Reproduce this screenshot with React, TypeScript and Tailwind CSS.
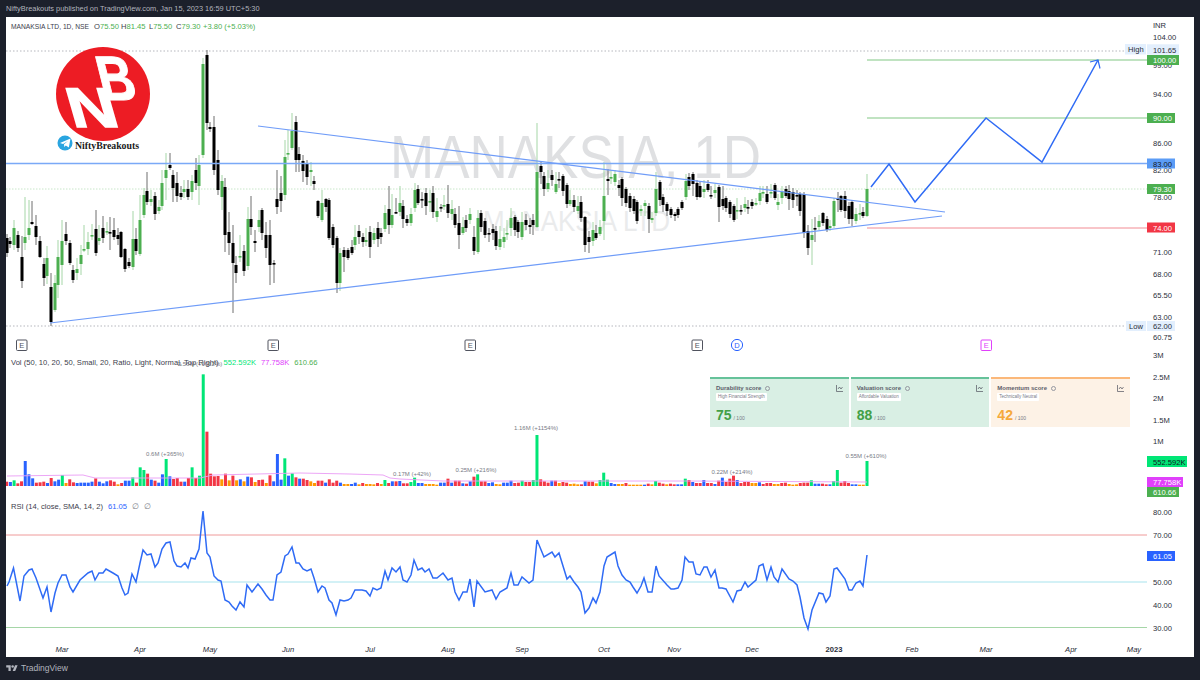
import { ReactNode } from "react";

// [x, bodyTop, bodyBottom, up, wickTop?, wickBottom?] in page pixels
type Candle = [number, number, number, number, number?, number?];

const candles: Candle[] = [
  [7,238,253,0],[10,241,244,0],[14,228,245,1,220,250],[18,235,248,0],[22,257,281,0,236,288],[25,237,243,1,197,250],[29,228,235,1,200,240],[32,222,224,0,201,225],[36,226,237,0,215,245],[40,241,257,0,236,258],
  [44,264,278,0,258,286],[47,258,276,1,246,284],[51,287,322,0,273,326],[55,283,310,1,275,312],[58,257,285,1,240,298],[62,241,265,1,220,285],[66,234,241,0,222,245],[70,243,263,0,240,265],[73,270,280,0,265,283],[77,269,273,1,258,280],
  [81,255,264,1,245,275],[84,249,250,1,225,252],[88,242,249,1,232,255],[92,235,236,1,224,240],[96,229,253,0,210,256],[99,238,241,1,225,245],[103,228,238,0,216,243],[107,231,232,1,222,235],[110,232,233,0,217,250],[114,230,237,0,218,240],
  [118,235,239,0,228,245],[121,232,257,0,231,258],[125,249,269,0,248,272],[129,262,266,0,258,268],[133,239,267,1,211,270],[136,239,251,0,228,255],[140,220,254,1,195,256],[144,195,215,1,188,218],[147,191,202,0,172,205],[151,199,202,1,190,206],
  [155,196,214,0,192,220],[159,207,211,1,200,214],[162,183,206,1,170,210],[166,170,178,1,153,200],[170,165,168,0,153,170],[173,175,188,0,170,202],[177,183,196,0,172,202],[181,193,197,0,186,200],[184,189,192,1,180,198],[188,189,197,0,180,200],
  [192,181,192,1,175,200],[196,170,183,0,158,190],[199,165,186,1,155,205],[203,64,155,1,58,158],[207,55,123,0,50,130],[210,127,129,0,122,132],[214,127,170,0,116,175],[218,160,190,0,150,195],[222,181,197,1,175,210],[225,187,235,0,178,252],
  [229,232,243,0,212,255],[233,243,263,0,225,313],[236,265,273,0,256,283],[240,256,257,1,235,262],[244,251,271,0,245,276],[248,219,266,1,207,270],[251,219,227,0,196,235],[255,241,243,0,230,252],[259,220,227,1,210,232],[262,210,233,0,208,240],
  [266,235,248,0,222,258],[270,235,265,0,220,285],[274,263,264,0,260,283],[277,199,207,0,170,214],[281,193,201,0,176,212],[285,157,195,1,140,200],[288,153,154,1,130,160],[292,131,148,1,113,150],[296,122,160,0,116,172],[299,154,160,0,147,172],
  [303,161,171,0,155,182],[307,163,177,0,160,185],[311,170,172,1,162,186],[314,181,184,0,176,190],[318,201,216,0,200,218],[322,203,220,1,190,222],[326,199,207,0,198,212],[329,200,238,0,198,240],[333,227,245,0,224,248],[337,238,283,0,236,293],
  [340,253,283,1,248,291],[344,250,257,0,247,272],[348,250,258,0,248,260],[352,247,253,0,240,255],[355,237,245,1,225,250],[359,231,237,0,225,244],[363,237,242,0,233,247],[366,240,242,1,228,246],[370,232,247,0,226,258],[374,233,240,1,228,244],
  [378,228,239,0,222,247],[381,233,237,0,228,244],[385,213,229,1,205,232],[389,209,225,0,186,234],[392,215,225,1,194,228],[396,212,213,0,198,214],[400,203,212,1,186,216],[403,206,219,0,200,228],[407,219,223,0,215,226],[411,214,223,1,208,226],
  [415,190,208,1,183,212],[418,189,203,0,185,205],[422,199,200,0,192,208],[426,193,206,0,188,215],[430,201,202,1,190,212],[433,193,212,0,186,218],[437,211,217,1,198,222],[441,207,208,0,204,212],[444,205,206,1,195,210],[448,204,213,0,185,218],
  [452,209,214,1,200,220],[455,214,225,0,208,228],[459,223,235,0,206,249],[463,227,233,1,217,235],[466,220,228,0,215,232],[470,214,220,1,208,224],[474,237,251,0,226,255],[478,218,252,1,210,254],[481,213,227,0,210,232],[485,221,235,0,218,238],
  [489,233,234,0,228,242],[493,229,233,0,224,240],[496,231,246,0,226,250],[500,239,247,1,226,250],[504,237,242,1,228,248],[507,233,234,1,220,240],[511,218,228,1,208,236],[515,217,230,0,215,236],[518,222,232,0,220,238],[522,222,237,1,212,240],
  [526,220,225,0,214,230],[530,225,227,0,218,234],[533,220,225,0,214,235],[537,172,227,1,123,228],[541,166,172,0,162,184],[544,176,189,0,172,196],[548,183,189,1,170,192],[552,175,180,0,170,186],[556,184,192,1,172,194],[559,179,180,0,172,188],
  [563,176,191,0,174,196],[567,185,204,0,183,208],[570,200,204,1,190,206],[574,200,207,0,195,212],[578,206,211,1,196,214],[581,202,218,0,196,222],[585,217,245,0,216,252],[589,237,242,0,231,253],[593,230,241,1,222,246],[596,233,238,0,225,240],
  [600,227,234,1,220,236],[604,196,221,1,162,240],[608,179,181,0,169,195],[611,177,178,1,171,184],[615,174,182,1,170,186],[619,185,188,0,180,196],[622,179,198,0,177,206],[626,189,203,0,187,207],[630,196,208,0,193,212],[634,199,211,0,196,214],
  [637,202,221,0,200,224],[641,209,211,1,205,216],[645,203,206,1,200,216],[649,206,219,0,203,233],[652,218,220,1,212,223],[656,189,213,1,172,216],[660,182,200,0,180,206],[663,197,205,0,194,212],[667,204,211,0,202,216],[671,209,215,0,207,218],
  [675,214,216,0,212,221],[678,209,215,0,207,218],[682,202,208,0,200,210],[686,181,197,1,174,200],[689,177,186,0,173,190],[693,174,184,0,172,196],[697,183,197,0,180,200],[700,186,197,0,182,198],[704,189,192,1,180,198],[708,184,190,0,180,192],
  [711,195,196,0,186,199],[715,190,193,1,184,198],[719,187,207,0,185,222],[723,199,206,0,186,210],[726,198,208,0,196,212],[730,202,214,0,200,218],[734,206,220,0,204,222],[737,210,211,1,198,219],[741,210,211,0,205,215],[745,204,208,1,197,212],
  [748,207,208,0,200,214],[752,202,206,0,199,209],[756,203,204,1,198,206],[760,193,201,1,186,205],[763,192,193,1,186,198],[767,194,202,0,186,204],[771,192,193,1,184,198],[775,185,198,0,183,200],[778,202,205,1,194,210],[782,192,198,1,186,204],
  [786,189,196,0,186,198],[789,191,199,0,185,210],[793,192,200,0,188,208],[797,195,196,0,190,206],[800,194,211,0,192,216],[804,194,233,0,192,238],[808,231,248,0,225,255],[812,235,240,1,219,265],[815,228,229,0,217,242],[819,221,227,1,215,230],
  [823,213,223,0,212,226],[827,219,230,0,216,232],[830,226,228,1,220,231],[834,201,226,1,198,228],[838,198,200,0,192,212],[841,196,210,0,195,212],[845,196,211,0,191,218],[849,206,219,0,202,224],[852,202,219,0,200,226],[856,214,221,1,208,224],
  [860,213,214,1,204,220],[863,212,216,0,207,218],[867,189,216,1,174,217],
];

// colour letter + height at 3x, read bar by bar off the reference
const volumes =
  "r13 b12 g17 r8 r14 b75 b35 b23 r10 r11 r13 b9 r24 b14 b19 g33 o9 r20 r11 b9 b10 b10 b10 b13 r23 b13 b8 b14 r17 r13 o5 r9 b16 b16 g26 r10 g56 g48 r37 b19 r16 b10 b35 g81 b29 r21 r24 r13 b13 r24 g56 r24 g31 g335 r163 r37 r29 r30 o20 r37 o17 r31 o17 b20 o14 b28 r26 o12 r18 r19 o9 r32 b14 b96 b19 g83 b31 g38 r26 b22 r22 r18 o14 o9 r16 r16 b10 r20 r10 r16 b10 o6 o6 b6 b10 o5 r9 o6 o6 o5 r9 o6 g18 r9 b14 r14 " +
  "b15 r8 r8 g12 g25 b9 b9 o6 o6 o6 o4 b10 b10 r22 b10 r16 r16 b8 r7 b14 r28 g35 r14 r14 b9 b11 o6 o5 b10 b10 b16 r9 r10 g16 r12 r12 g18 g153 r20 r14 r10 b16 r16 o9 r12 r10 o6 o7 o5 r5 b14 r13 r13 o8 g18 g40 g19 b9 b6 o6 o6 r9 o4 o4 o4 o4 b4 r7 o5 g15 r10 r7 o5 r7 r5 b5 b5 g22 r18 b12 r9 r9 b18 r9 r9 b6 r16 b25 r12 r22 r31 b18 r9 r12 r12 o9 o9 b11 r6 r9 r9 o6 o6 r9 r10 o6 o4 o5 r9 r10 r10 g17 b7 b7 r7 r5 b5 g15 g48 r10 r15 r9 b5 b5 o4 o4 g75";

const volColors: Record<string, string> = { r: "#f23645", b: "#2962ff", g: "#00e676", o: "#ff9800" };

const rsi =
  "7,586 9,582 13.5,568 20,601 24,576 29,570 32,569 36,578 43,598 47,587 51,612 55,593 58,583 62,575 66,575 70,587 73,592 80,580 88,573 92,571 95,580 99,573 103,573 106,569 113,573 118,576 122,588 125,595 128,593 132,574 136,582 140,563 143,550 147,555 151,554 155,567 158,563 162,549 166,543 170,542 174,561 177,566 181,567 185,563 188,568 191,558 195,559 199,549 203,511 207,553 210,557 214,576 218,580 221,581 225,600 229,602 232,606 236,610 240,602 244,607 247,585 252,592 258,584 262,589 266,595 270,600 273,600 277,575 281,572 285,556 288,554 292,547 296,563 299,563 303,569 307,571 311,569 314,578 318,592 322,586 325,588 329,600 332,603 336,615 340,600 344,601 348,600 351,598 355,590 359,590 362,590 366,591 370,596 373,588 377,590 381,588 385,571 388,580 392,568 396,572 " +
  "400,567 403,580 407,582 411,575 414,560 418,570 422,568 425,572 429,569 433,578 437,578 443,573 448,580 452,578 455,592 459,600 463,592 467,592 470,579 474,607 477,581 485,592 492,590 496,599 500,592 507,588 511,573 514,585 518,585 522,577 529,583 533,580 537,540 544,557 552,552 555,557 559,553 567,579 570,576 574,582 578,587 581,592 585,613 589,608 593,598 596,603 600,592 604,566 607,557 615,552 618,566 622,575 626,580 630,582 633,587 637,593 641,586 644,578 648,592 652,592 656,566 659,576 667,585 671,589 674,589 678,588 682,580 685,557 689,562 693,562 696,574 700,575 704,567 707,567 711,577 715,570 719,588 722,588 726,589 733,602 737,591 741,590 745,582 748,587 756,580 759,566 763,564 767,580 771,567 774,577 778,582 782,569 789,579 793,581 797,585 800,597 804,618 808,629 812,610 819,593 823,594 826,602 830,596 834,569 837,568 845,579 849,590 852,590 856,583 860,581 863,586 867,555";

const volSma =
  "7,476 83,475 95,478 200,478 213,475 300,473 350,474 383,475 390,478 400,479 443,481 687,481 867,482";

const FONT = "font-['Liberation_Sans',sans-serif]";

function Pane({ top, height, children }: { top: number; height: number; children: ReactNode }) {
  return (
    <svg width={1187} height={height} viewBox={`6 ${top} 1187 ${height}`} className="block shrink-0 overflow-visible">
      {children}
    </svg>
  );
}

function Candles() {
  return (
    <g>
      {candles.map(([x, top, bottom, up, wt, wb], i) => (
        <g key={i}>
          <line x1={x} x2={x} y1={wt ?? top - 4} y2={wb ?? bottom + 4} stroke={up ? "#a5d6a7" : "#6f6f6f"} strokeWidth={1} />
          <rect x={x - 1.5} y={top} width={3} height={Math.max(bottom - top, 1.6)} fill={up ? "#4caf50" : "#000000"} />
        </g>
      ))}
    </g>
  );
}

function Axis({ y, label }: { y: number; label: string }) {
  return (
    <text x={1153} y={y + 3} className="text-[7.6px] fill-[#2a2e39]">
      {label}
    </text>
  );
}

function Tag({ y, w, bg, color = "#ffffff", label, h = 10 }: { y: number; w: number; bg: string; color?: string; label: string; h?: number }) {
  return (
    <g>
      <rect x={1147} y={y - h / 2} width={w} height={h} fill={bg} />
      <text x={1153} y={y + 3} fill={color} className="text-[7.6px]">
        {label}
      </text>
    </g>
  );
}

function Earn({ x, color = "#50535e" }: { x: number; color?: string }) {
  return (
    <g>
      <rect x={x - 5} y={340} width={10.5} height={10.5} rx={1} fill="#ffffff" stroke={color} strokeWidth={1} />
      <text x={x + 0.2} y={348} textAnchor="middle" fill={color} className="text-[7.5px]">
        E
      </text>
    </g>
  );
}

function VolLabel({ x, y, label, color = "#787b86" }: { x: number; y: number; label: string; color?: string }) {
  return (
    <text x={x} y={y} textAnchor="middle" fill={color} className="text-[6px]">
      {label}
    </text>
  );
}

function NbLogo() {
  return (
    <g>
      <circle cx={103} cy={94} r={47} fill="#ed1c24" />
      <text transform="translate(73 127) skewX(16) scale(1.2 1)" stroke="#ffffff" strokeWidth={1.6} className="text-[56px] font-bold fill-white">
        N
      </text>
      <text transform="translate(103 100) skewX(14) scale(.8 1)" stroke="#ffffff" strokeWidth={1} className="text-[63px] font-bold fill-white">
        B
      </text>
      <circle cx={65} cy={143} r={7.5} fill="#2aa5e0" />
      <path d="M60 143l10.5-4.4-1.7 9-3-2.2-1.5 1.5-.3-2.6 4-3.4-5 3z" fill="#ffffff" />
      <text x={75} y={149} className="font-['Liberation_Serif',serif] text-[9.8px] font-bold fill-[#1a1a1a]">
        NiftyBreakouts
      </text>
    </g>
  );
}

function MainPane() {
  return (
    <Pane top={17} height={333}>
      <text x={390} y={178} textLength={371} lengthAdjust="spacingAndGlyphs" className="text-[62px] fill-[#dfe0e2]">
        MANAKSIA, 1D
      </text>
      <text x={483} y={231} textLength={187} lengthAdjust="spacingAndGlyphs" className="text-[30px] fill-[#eaebec]">
        MANAKSIA LTD
      </text>

      <line x1={6} x2={1125} y1={51} y2={51} stroke="#9598a1" strokeWidth={0.7} strokeDasharray="1.5 2" />
      <line x1={6} x2={1125} y1={326} y2={326} stroke="#9598a1" strokeWidth={0.7} strokeDasharray="1.5 2" />
      <line x1={6} x2={1147} y1={189} y2={189} stroke="#c8e6c9" strokeWidth={1} strokeDasharray="1.5 1.5" />

      <Candles />

      <line x1={6} x2={1147} y1={163.5} y2={163.5} stroke="#7aa9f7" strokeWidth={1.3} />
      <line x1={867} x2={1147} y1={60} y2={60} stroke="#81c784" strokeWidth={1} />
      <line x1={867} x2={1147} y1={118} y2={118} stroke="#81c784" strokeWidth={1} />
      <line x1={867} x2={1147} y1={228} y2={228} stroke="#f28b93" strokeWidth={1} />

      <line x1={258} y1={126} x2={945} y2={212} stroke="#6f9cf8" strokeWidth={1.2} />
      <line x1={50} y1={323} x2={942} y2={216} stroke="#6f9cf8" strokeWidth={1.2} />
      <polyline points="871,187 889,164 915,202 986,118 1042,162 1098,60" fill="none" stroke="#2f6bf5" strokeWidth={1.5} />
      <polyline points="1090,62 1098,60 1100,68.5" fill="none" stroke="#2f6bf5" strokeWidth={1.2} />

      <NbLogo />

      <text x={1153} y={28} className="text-[7.6px] fill-[#2a2e39]">
        INR
      </text>
      <Axis y={37} label="104.00" />
      <Axis y={65} label="99.00" />
      <Axis y={94} label="94.00" />
      <Axis y={143} label="86.00" />
      <Axis y={170} label="82.00" />
      <Axis y={197} label="78.00" />
      <Axis y={252} label="71.00" />
      <Axis y={274} label="68.00" />
      <Axis y={295} label="65.50" />
      <Axis y={317} label="63.00" />
      <Axis y={337} label="60.75" />

      <rect x={1125} y={44} width={21} height={10.5} fill="#e3effd" />
      <text x={1128} y={52} className="text-[7.6px] fill-[#2a2e39]">
        High
      </text>
      <Tag y={49.5} w={32} bg="#e3effd" color="#2a2e39" label="101.65" h={10.5} />
      <Tag y={60} w={32} bg="#4caf50" label="100.00" />
      <Tag y={118} w={28} bg="#4caf50" label="90.00" />
      <Tag y={163.5} w={28} bg="#5b9cf6" color="#131722" label="83.00" />
      <Tag y={189} w={28} bg="#4caf50" label="79.30" />
      <Tag y={227.5} w={28} bg="#f23645" label="74.00" />
      <rect x={1126} y={321} width={20} height={10} fill="#e3effd" />
      <text x={1129} y={329} className="text-[7.6px] fill-[#2a2e39]">
        Low
      </text>
      <Tag y={326} w={28} bg="#e3effd" color="#2a2e39" label="62.00" />

      <Earn x={21.5} />
      <Earn x={273} />
      <Earn x={470} />
      <Earn x={697} />
      <Earn x={986} color="#e040fb" />
      <circle cx={737} cy={345} r={5.6} fill="#ffffff" stroke="#2962ff" strokeWidth={1} />
      <text x={737} y={348} textAnchor="middle" className="text-[7.5px] fill-[#2962ff]">
        D
      </text>
    </Pane>
  );
}

function VolumePane() {
  const bars = volumes.split(" ");
  const step = (867 - 6.7) / (bars.length - 1);
  return (
    <Pane top={350} height={140}>
      {bars.map((b, i) => {
        const h = Number(b.slice(1)) / 3;
        return <rect key={i} x={6.7 + i * step - 1.5} y={486 - h} width={3} height={h} fill={volColors[b[0]]} />;
      })}
      <polyline points={volSma} fill="none" stroke="#ea9cf5" strokeWidth={0.9} />

      <VolLabel x={200} y={366} label="2.56M (+1012%)" />
      <VolLabel x={165} y={456} label="0.6M (+365%)" />
      <VolLabel x={412} y={476} label="0.17M (+42%)" />
      <VolLabel x={476} y={472} label="0.25M (+216%)" />
      <VolLabel x={536} y={430} label="1.16M (+1154%)" />
      <VolLabel x={732} y={474} label="0.22M (+214%)" />
      <VolLabel x={866} y={458} label="0.55M (+610%)" />

      <Axis y={355} label="3M" />
      <Axis y={377} label="2.5M" />
      <Axis y={398} label="2M" />
      <Axis y={420} label="1.5M" />
      <Axis y={441} label="1M" />
      <Tag y={461.5} w={40} bg="#00e676" color="#131722" label="552.592K" h={11} />
      <Tag y={482} w={36} bg="#e040fb" label="77.758K" />
      <Tag y={492} w={32} bg="#4caf50" label="610.66" />
    </Pane>
  );
}

function RsiPane() {
  return (
    <Pane top={490} height={150}>
      <line x1={6} x2={1147} y1={535} y2={535} stroke="#ef9a9a" strokeWidth={1} />
      <line x1={6} x2={1147} y1={582} y2={582} stroke="#c4ecf3" strokeWidth={1.6} />
      <line x1={6} x2={1147} y1={627.5} y2={627.5} stroke="#a5d6a7" strokeWidth={1} />
      <polyline points={rsi} fill="none" stroke="#2f6bf5" strokeWidth={1.5} />

      <Axis y={512} label="80.00" />
      <Axis y={535} label="70.00" />
      <Axis y={582} label="50.00" />
      <Axis y={605} label="40.00" />
      <Axis y={628} label="30.00" />
      <Tag y={556} w={28} bg="#2962ff" label="61.05" />
    </Pane>
  );
}

const months: [string, number][] = [
  ["Mar", 62], ["Apr", 140], ["May", 210], ["Jun", 288], ["Jul", 370], ["Aug", 448], ["Sep", 522], ["Oct", 604],
  ["Nov", 674], ["Dec", 752], ["2023", 834], ["Feb", 912], ["Mar", 986], ["Apr", 1071], ["May", 1134],
];

function TimeAxis() {
  return (
    <Pane top={640} height={17}>
      {months.map(([m, x]) => (
        <text
          key={x}
          x={x}
          y={652}
          textAnchor="middle"
          className={m === "2023" ? "text-[7.6px] font-bold fill-[#2a2e39]" : "text-[7.6px] italic fill-[#2a2e39]"}
        >
          {m}
        </text>
      ))}
    </Pane>
  );
}

function ScoreCard({ title, pill, score, bg, bar, color }: { title: string; pill: string; score: number; bg: string; bar: string; color: string }) {
  return (
    <div className={`flex h-full flex-1 flex-col border-t-2 px-[6px] pt-[5px] ${bg} ${bar}`}>
      <div className="flex items-center justify-between">
        <div className="flex items-center gap-[4px]">
          <span className="text-[6px] font-bold leading-[8px] text-[#5d606b]">{title}</span>
          <span className="h-[5px] w-[5px] rounded-full border-[0.5px] border-[#9598a1]" />
        </div>
        <svg width="7" height="7" viewBox="0 0 7 7" fill="none" stroke="#50535e" strokeWidth="0.7">
          <path d="M.5 0v6.500H7M2 4l1.500-2 1.500 2L6.500 2" />
        </svg>
      </div>
      <span className="mt-[1px] self-start rounded-[1px] bg-white px-[2px] text-[4.5px] leading-[8px] text-[#787b86]">{pill}</span>
      <div className="mt-[7px] flex items-baseline gap-[2px]">
        <span className={`text-[14px] font-semibold leading-[14px] ${color}`}>{score}</span>
        <span className="text-[5px] text-[#787b86]">/ 100</span>
      </div>
    </div>
  );
}

function Legends() {
  return (
    <>
      <div className="absolute left-[5px] top-[5px] flex items-baseline whitespace-nowrap text-[7.6px] leading-[9px] text-[#3c404c]">
        <span className="w-[83px] text-[6.7px]">MANAKSIA LTD, 1D, NSE</span>
        <span className="w-[27px]">O<span className="text-[#4caf50]">75.50</span></span>
        <span className="w-[28px]">H<span className="text-[#4caf50]">81.45</span></span>
        <span className="w-[27px]">L<span className="text-[#4caf50]">75.50</span></span>
        <span className="w-[27px]">C<span className="text-[#4caf50]">79.30</span></span>
        <span className="text-[#4caf50]">+3.80 (+5.03%)</span>
      </div>
      <div className="absolute left-[5px] top-[341px] flex gap-[5px] whitespace-nowrap text-[7.6px] leading-[9px] text-[#3c404c]">
        <span>Vol (50, 10, 20, 50, Small, 20, Ratio, Light, Normal, Top Right)</span>
        <span className="text-[#00e676]">552.592K</span>
        <span className="text-[#e040fb]">77.758K</span>
        <span className="text-[#4caf50]">610.66</span>
      </div>
      <div className="absolute left-[5px] top-[485px] flex gap-[5px] whitespace-nowrap text-[7.6px] leading-[9px] text-[#3c404c]">
        <span>RSI (14, close, SMA, 14, 2)</span>
        <span className="text-[#2962ff]">61.05</span>
        <span className="text-[#787b86]">∅</span>
        <span className="text-[#787b86]">∅</span>
      </div>
    </>
  );
}

export default function App() {
  return (
    <div className={`flex h-[680px] w-[1200px] flex-col overflow-hidden bg-[#1c202b] ${FONT}`}>
      <div className="flex h-[17px] items-center px-[6px] text-[7.4px] text-[#b2b5be]">
        NiftyBreakouts published on TradingView.com, Jan 15, 2023 16:59 UTC+5:30
      </div>
      <div className="relative mx-[6px] flex h-[640px] flex-col overflow-hidden bg-white">
        <MainPane />
        <VolumePane />
        <RsiPane />
        <TimeAxis />
        <Legends />
        <div className="absolute left-[704px] top-[360px] flex h-[50px] w-[420px] gap-[2px]">
          <ScoreCard title="Durability score" pill="High Financial Strength" score={75} bg="bg-[#d9efe4]" bar="border-[#66c29a]" color="text-[#43a047]" />
          <ScoreCard title="Valuation score" pill="Affordable Valuation" score={88} bg="bg-[#d9efe4]" bar="border-[#66c29a]" color="text-[#43a047]" />
          <ScoreCard title="Momentum score" pill="Technically Neutral" score={42} bg="bg-[#fdf2e6]" bar="border-[#fbb87a]" color="text-[#f5a93b]" />
        </div>
      </div>
      <div className="flex flex-1 items-center gap-[3px] px-[6px] pb-[1px]">
        <svg width="12" height="9" viewBox="0 0 36 28" fill="#b2b5be">
          <path d="M14 22H7V11H0V4h14v18zM28 22h-8l7.500-18h8L28 22z" />
          <circle cx="20" cy="8" r="4" />
        </svg>
        <span className="text-[8.5px] text-[#b2b5be]">TradingView</span>
      </div>
    </div>
  );
}
